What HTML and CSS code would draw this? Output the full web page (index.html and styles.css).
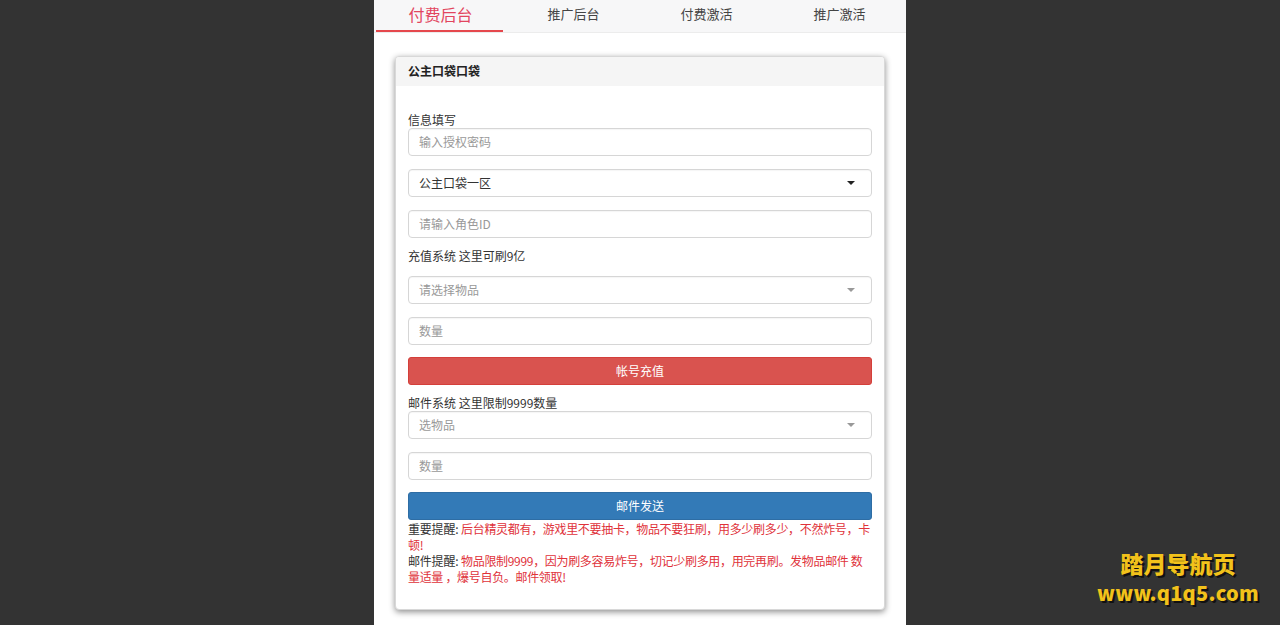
FILE: index.html
```html
<!DOCTYPE html>
<html>
	<head>
		<meta charset="UTF-8">
		<title>公主口袋口袋</title>
		<link rel="stylesheet" href="styles.css">
	</head>
	<body>
		<div id="page">
			<div id="nav">
				<a href="javascript:" class="active">付费后台</a>
				<a href="javascript:">推广后台</a>
				<a href="javascript:">付费激活</a>
				<a href="javascript:">推广激活</a>
			</div>
			<div class="panel">
				<div class="panel-head">公主口袋口袋</div>
				<div class="panel-body">
					<div class="lab">信息填写</div>
					<input class="ipt g13" type="text" placeholder="输入授权密码" />
					<div class="sel g13"><span>公主口袋一区</span><i class="arr"></i></div>
					<input class="ipt g10" type="text" placeholder="请输入角色ID" />
					<div class="lab g12">充值系统 这里可刷9亿</div>
					<div class="sel g13 ph"><span>请选择物品</span><i class="arr"></i></div>
					<input class="ipt g12" type="text" placeholder="数量" />
					<a href="javascript:" class="btn red g10">帐号充值</a>
					<div class="lab">邮件系统 这里限制9999数量</div>
					<div class="sel g13 ph"><span>选物品</span><i class="arr"></i></div>
					<input class="ipt g12" type="text" placeholder="数量" />
					<a href="javascript:" class="btn blue">邮件发送</a>
					<p class="tip"><span>重要提醒:</span> <em>后台精灵都有，游戏里不要抽卡，物品不要狂刷，用多少刷多少，不然炸号，卡顿!</em></p>
					<p class="tip"><span>邮件提醒:</span> <em>物品限制9999，因为刷多容易炸号，切记少刷多用，用完再刷。发物品邮件 数量适量 ，爆号自负。邮件领取!</em></p>
				</div>
			</div>
		</div>
		<div id="mark">
			<b>踏月导航页</b>
			<b>www.q1q5.com</b>
		</div>
	</body>
</html>
```

FILE: styles.css
```css
*{box-sizing: border-box;}
body{margin: 0; background: #333; font-family: "Noto Sans CJK SC", "Noto Sans", sans-serif; font-size: 12px; color: #333;}
a{text-decoration: none;}
p{margin: 0;}
#page{width: 532px; min-height: 625px; margin: 0 auto; background: #fff; overflow: hidden;}
#nav{display: flex; height: 33px; background: #f7f7f8; border-bottom: 1px solid #ececec;}
#nav a{flex: 1; height: 32px; line-height: 28px; text-align: center; color: #444; font-size: 13px;}
#nav .active{color: #e2455e; font-size: 16px; background: linear-gradient(#e5484d, #e5484d) no-repeat 2px 30px / 127px 2px;}
.panel{margin: 23px 21px 0; border: 1px solid #d8d8d8; border-radius: 4px; box-shadow: 0 2px 6px rgba(0,0,0,.45); background: #fff; overflow: hidden;}
.panel-head{height: 29px; line-height: 28px; padding: 0 12px; background: #f5f5f5; font-size: 12px; font-weight: bold; color: #222;}
.panel-body{padding: 26px 12px 24px;}
.lab{height: 16px; line-height: 15px; font-size: 12px; color: #333;}
.ipt, .sel{display: flex; align-items: center; width: 100%; height: 28px; padding: 0 10px 2px; border: 1px solid #d6d6d6; border-radius: 4px; font: inherit; font-size: 12px; color: #333; background: #fff; box-shadow: inset 0 1px 1px rgba(0,0,0,.04);}
.ipt::placeholder{color: #999;}
.sel span{flex: 1;}
.sel .arr{width: 0; height: 0; border-left: 4px solid transparent; border-right: 4px solid transparent; border-top: 4px solid #222; margin: 2px 6px 0 0;}
.sel.ph{color: #999;}
.sel.ph .arr{border-top-color: #999;}
.btn{display: block; height: 28px; text-align: center; color: #fff; font-size: 12px; border-radius: 3px;}
.red{background: #d9534f; border: 1px solid #d43f3a; line-height: 25px;}
.blue{background: #337ab7; border: 1px solid #2e6da4; line-height: 25px;}
.g10{margin-bottom: 10px;}
.g12{margin-bottom: 12px;}
.g13{margin-bottom: 13px;}
.tip{line-height: 16px; font-size: 12px; color: #333;}
.tip:first-of-type{margin-top: 1px;}
.tip span{letter-spacing: -.2px;}
.tip em{font-style: normal; color: #e0323a; letter-spacing: -.32px;}
#mark{position: absolute; right: 20px; bottom: 17px; width: 164px; text-align: center;}
#mark b{display: block; color: #f2c21b; font-family: "Noto Sans CJK SC", sans-serif; font-weight: 900; text-shadow: 2px 2px 0 #111;}
#mark b:first-child{font-size: 23px; line-height: 30px;}
#mark b:last-child{font-size: 20px; line-height: 30px; letter-spacing: .3px;}
```
